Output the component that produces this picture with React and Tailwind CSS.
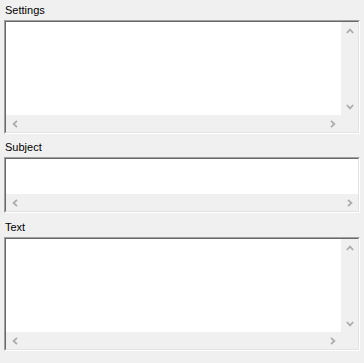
import React from 'react';

const Arrow = ({ dir }) => {
  const paths = {
    up: 'M0.8 5 L4 1.6 L7.2 5',
    down: 'M0.8 1 L4 4.4 L7.2 1',
    left: 'M5 0.8 L1.6 4 L5 7.2',
    right: 'M1 0.8 L4.4 4 L1 7.2',
  };
  const horiz = dir === 'left' || dir === 'right';
  return (
    <div className="w-[17px] h-[17px] flex items-center justify-center shrink-0">
      <svg
        width={horiz ? 6 : 8}
        height={horiz ? 8 : 6}
        viewBox={horiz ? '0 0 6 8' : '0 0 8 6'}
        fill="none"
        stroke="#acacac"
        strokeWidth="1.8"
      >
        <path d={paths[dir]} />
      </svg>
    </div>
  );
};

const ScrollBox = ({ height, vscroll }) => (
  <div className={`${height} border border-t-[#a0a0a0] border-l-[#a0a0a0] border-b-white border-r-white`}>
    <div className="h-full flex flex-col border border-t-[#696969] border-l-[#696969] border-b-[#e3e3e3] border-r-[#e3e3e3]">
      <div className="flex-1 flex min-h-0">
        <div className="flex-1 bg-white" />
        {vscroll && (
          <div className="w-[17px] flex flex-col justify-between bg-[#f0f0f0]">
            <Arrow dir="up" />
            <Arrow dir="down" />
          </div>
        )}
      </div>
      <div className="h-[17px] flex bg-[#f0f0f0]">
        <div className="flex-1 flex justify-between">
          <Arrow dir="left" />
          <Arrow dir="right" />
        </div>
        {vscroll && <div className="w-[17px]" />}
      </div>
    </div>
  </div>
);

const Label = ({ height, children }) => (
  <div className={`${height} flex items-end pb-[3px] pl-[1px] text-[11px] leading-[13px] text-black`}>
    {children}
  </div>
);

export default function App() {
  return (
    <div className="w-[364px] h-[363px] bg-[#f0f0f0] px-[4px] font-['Liberation_Sans',Arial,sans-serif] overflow-hidden">
      <Label height="h-[20px]">Settings</Label>
      <ScrollBox height="h-[114px]" vscroll />
      <Label height="h-[23px]">Subject</Label>
      <ScrollBox height="h-[56px]" />
      <Label height="h-[24px]">Text</Label>
      <ScrollBox height="h-[114px]" vscroll />
    </div>
  );
}
